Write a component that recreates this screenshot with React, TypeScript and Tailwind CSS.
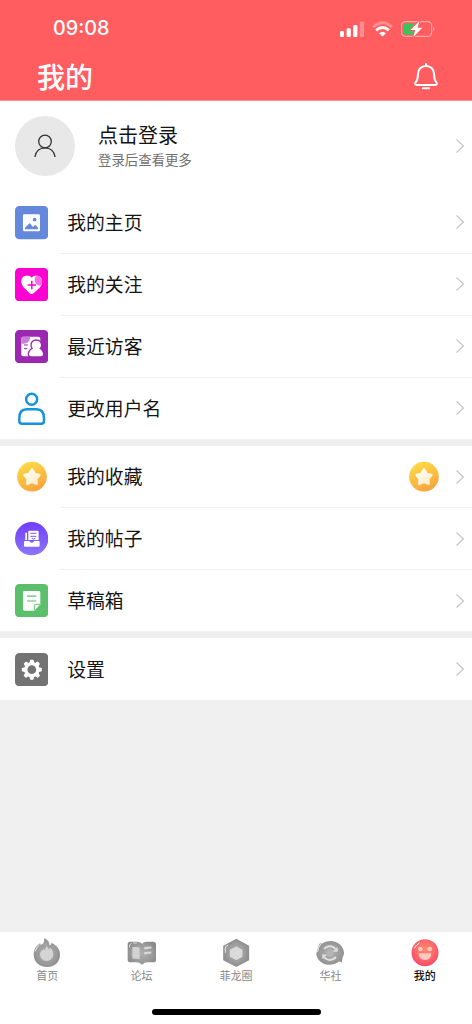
import type { ReactNode } from "react";

interface MenuItem {
    label: string;
    icon: ReactNode;
    extra?: ReactNode;
}

interface TabItem {
    label: string;
    icon: ReactNode;
    active?: boolean;
}

const Tile = ({ color, children }: { color: string; children: ReactNode }) => (
    <svg viewBox="0 0 100 100" className="w-[33.3px] h-[33.3px]">
        <rect width="100" height="100" rx="13" fill={color} />
        {children}
    </svg>
);

const PhotoIcon = () => (
    <Tile color="#6489dc">
        <rect x="24" y="25" width="51" height="51" rx="4" fill="#fff" />
        <circle cx="59" cy="41" r="5.5" fill="#6489dc" />
        <path d="M30 70V65L42 53Q44 51 46 53L54 63L59 58Q61 57 63 58L69 65V70Z" fill="#6489dc" />
    </Tile>
);

const HeartIcon = () => (
    <Tile color="#ff00d2">
        <clipPath id="heart">
            <path d="M50 29C43 20 29 20 22 29C16 38 19 50 27 59L44 76Q50 81 56 76L74 59C82 50 85 38 78 29C71 20 57 20 50 29Z" />
        </clipPath>
        <g clipPath="url(#heart)">
            <rect width="100" height="100" fill="#fff" />
            <circle cx="76" cy="36" r="17" fill="#ff6be6" />
        </g>
        <path d="M38 51H63M50.500 38V64" stroke="#ff00d2" strokeWidth="4.500" />
    </Tile>
);

const VisitorIcon = () => (
    <Tile color="#9c27b0">
        <rect x="19" y="20" width="57" height="59" rx="6" fill="#fff" />
        <path d="M19 41V26Q19 20 25 20H46Q45 40 25 41Z" fill="#c77ed6" />
        <path d="M27 45H39M27 56H37" stroke="#9c27b0" strokeWidth="3" />
        <path
            d="M64 32C55 32 50 38 50 45C50 50 52 53 54 56C45 60 42 66 42 73Q42 79 48 79H78Q84 79 84 73C84 66 81 60 73 56C76 53 78 50 78 45C78 38 73 32 64 32Z"
            fill="#fff"
            stroke="#9c27b0"
            strokeWidth="8"
            paintOrder="stroke"
        />
    </Tile>
);

const UserIcon = () => (
    <svg viewBox="0 0 100 100" className="w-[33.3px] h-[33.3px]" fill="none" stroke="#1694db" strokeWidth="7.500">
        <circle cx="50" cy="22" r="16.500" />
        <path d="M35 52H65C80 52 87 63 87 79V87Q87 95 79 95H21Q13 95 13 87V79C13 63 20 52 35 52Z" />
    </svg>
);

const StarIcon = () => (
    <svg viewBox="0 0 100 100" className="w-[33.3px] h-[33.3px]">
        <defs>
            <linearGradient id="gold" x1="0.3" y1="0" x2="0.7" y2="1">
                <stop offset="0" stopColor="#fddb46" />
                <stop offset="1" stopColor="#f7a33e" />
            </linearGradient>
            <linearGradient id="cream" x1="0" y1="0" x2="1" y2="1">
                <stop offset="0" stopColor="#fffdf5" />
                <stop offset="1" stopColor="#fdebc9" />
            </linearGradient>
        </defs>
        <circle cx="51" cy="50" r="44.500" fill="url(#gold)" />
        <path
            d="M51 29L59 42L73 45L63.500 57L65 71L51 65.500L37 71L38.500 57L29 45L43 42Z"
            fill="url(#cream)"
            stroke="url(#cream)"
            strokeWidth="8"
            strokeLinejoin="round"
        />
    </svg>
);

const PostIcon = () => (
    <svg viewBox="0 0 100 100" className="w-[33.3px] h-[33.3px]">
        <linearGradient id="violet" x1="0" y1="0" x2="0" y2="1">
            <stop offset="0" stopColor="#703cff" />
            <stop offset="1" stopColor="#8d76fa" />
        </linearGradient>
        <circle cx="50" cy="50" r="50" fill="url(#violet)" />
        <path d="M31 32H36V54H31ZM40 29Q40 26 43 26H68Q71 26 71 29V54H40Z" fill="#fff" />
        <path d="M46 34H64M46 43H64M50 49Q55 54 61 49" stroke="#7957f6" strokeWidth="3" fill="none" />
        <path d="M27 60Q27 57 30 57H43Q45 62 50 62Q55 62 58 57H71Q74 57 74 60V71Q74 74 71 74H30Q27 74 27 71Z" fill="#fff" />
    </svg>
);

const DraftIcon = () => (
    <Tile color="#5bbf6c">
        <path d="M28 21H72Q76 21 76 25V61L58 80H28Q24 80 24 76V25Q24 21 28 21Z" fill="#fff" />
        <path d="M36 36.500H64M36 51H64" stroke="#5bbf6c" strokeWidth="3.500" />
        <path d="M58 79V64Q58 61 61 61H75" fill="#fff" stroke="#5bbf6c" strokeWidth="3" />
    </Tile>
);

const GearIcon = () => (
    <Tile color="#737373">
        <circle cx="50.500" cy="50" r="18" fill="none" stroke="#fff" strokeWidth="10" />
        {[0, 45, 90, 135, 180, 225, 270, 315].map((deg) => (
            <path
                key={deg}
                d="M45 22Q45 20 47 20H54Q56 20 56 22L58 32H43Z"
                fill="#fff"
                transform={`rotate(${deg} 50.5 50)`}
            />
        ))}
    </Tile>
);

const Chevron = () => (
    <svg viewBox="0 0 10 16" className="w-[10px] h-[16px]" fill="none" stroke="#c3c3c6" strokeWidth="1.100">
        <path d="M1.500 1.500L8.500 8L1.500 14.500" />
    </svg>
);

const FlameTab = () => (
    <svg viewBox="0 0 90 90" className="w-[30px] h-[30px]">
        <path d="M36 1C48 5 52 12 53 22C56 21 58 18 58 14C75 22 84 34 84 50C84 72 67 87 45 87C22 87 5 72 5 49C5 35 11 24 22 17Q26 15 26 21C34 19 38 13 36 1Z" fill="url(#grey)" />
        <path d="M35 34L38 37L44 24L50 34L55 30C61 35 64 41 64 49C64 61 55 69 44 69C33 69 24 61 24 49C24 42 28 37 35 34Z" fill="#d4d4d4" />
        <path d="M10 39Q13 27 21 22" stroke="#fff" strokeWidth="2.500" fill="none" strokeLinecap="round" />
    </svg>
);

const BookTab = () => (
    <svg viewBox="0 0 90 90" className="w-[30px] h-[30px]">
        <path d="M2 19Q2 11 10 11H30Q40 11 45 17Q50 11 60 11H78Q87 11 87 19V65Q87 73 79 73H61Q53 73 45 80Q37 73 29 73H11Q2 73 2 65Z" fill="url(#grey)" />
        <path d="M17 27H32Q38 27 38 33V64Q34 62 28 62H20Q16 62 16 58V31Q16 27 17 27Z" fill="#d2d2d2" />
        <path d="M52 32Q61 28 73 29M52 47Q61 43 73 44" stroke="#d8d8d8" strokeWidth="7" fill="none" />
        <path d="M7 27Q7 17 13 16M19 15H29" stroke="#fff" strokeWidth="2" fill="none" strokeLinecap="round" />
    </svg>
);

const HexTab = () => (
    <svg viewBox="0 0 90 90" className="w-[30px] h-[30px]">
        <path d="M46 5L82 25V65L46 84L9 65V25Z" fill="url(#grey)" stroke="#929292" strokeWidth="5" strokeLinejoin="round" />
        <path d="M46 28L62 37V55L46 64L29 55V37Z" fill="#dadada" stroke="#dadada" strokeWidth="5" strokeLinejoin="round" />
        <path d="M13 43V30Q13 24 20 22" stroke="#fff" strokeWidth="2.500" fill="none" strokeLinecap="round" />
    </svg>
);

const CycleTab = () => (
    <svg viewBox="0 0 90 90" className="w-[30px] h-[30px]">
        <path d="M45 9C66 9 85 22 87 44Q87 51 83 58L80 74L73 70C63 78 52 80 42 80C22 80 5 65 4 47L9 28L15 16L20 17Q31 9 45 9Z" fill="url(#grey)" />
        <circle cx="45" cy="45" r="11" fill="#b4b4b4" />
        <path d="M28 33C36 22 53 22 61 33" stroke="#e0e0e0" strokeWidth="6" fill="none" />
        <path d="M68 26V41H54Z" fill="#e0e0e0" />
        <path d="M63 57C54 68 37 69 28 58" stroke="#e0e0e0" strokeWidth="6" fill="none" />
        <path d="M22 64V49L36 50Z" fill="#e0e0e0" />
        <path d="M8 41Q8 29 17 19" stroke="#fff" strokeWidth="2.500" fill="none" strokeLinecap="round" />
    </svg>
);

const SmileTab = () => (
    <svg viewBox="0 0 90 90" className="w-[30px] h-[30px]">
        <radialGradient id="coral" cx="0.5" cy="0.4" r="0.55">
            <stop offset="0" stopColor="#ff8a70" />
            <stop offset="0.6" stopColor="#fb6c6c" />
            <stop offset="1" stopColor="#f94e68" />
        </radialGradient>
        <circle cx="45" cy="44" r="40.500" fill="url(#coral)" />
        <circle cx="31" cy="33" r="7" fill="#ffc9c0" />
        <circle cx="59" cy="33" r="7" fill="#ffc9c0" />
        <path d="M26 46H64Q64 66 45 66Q26 66 26 46Z" fill="#ffc9c0" />
        <path d="M14 30L19 22M21 21L27 16" stroke="#fff" strokeWidth="3" strokeLinecap="round" />
    </svg>
);

const groups: MenuItem[][] = [
    [
        { label: "我的主页", icon: <PhotoIcon /> },
        { label: "我的关注", icon: <HeartIcon /> },
        { label: "最近访客", icon: <VisitorIcon /> },
        { label: "更改用户名", icon: <UserIcon /> },
    ],
    [
        { label: "我的收藏", icon: <StarIcon />, extra: <StarIcon /> },
        { label: "我的帖子", icon: <PostIcon /> },
        { label: "草稿箱", icon: <DraftIcon /> },
    ],
    [{ label: "设置", icon: <GearIcon /> }],
];

const tabs: TabItem[] = [
    { label: "首页", icon: <FlameTab /> },
    { label: "论坛", icon: <BookTab /> },
    { label: "菲龙圈", icon: <HexTab /> },
    { label: "华社", icon: <CycleTab /> },
    { label: "我的", icon: <SmileTab />, active: true },
];

const Header = () => (
    <header className="h-[101px] bg-[#ff5d60] border-b border-[#ff9495] text-white">
        <div className="h-[56px] pl-[53px] pr-[36px] pt-px flex items-center justify-between">
            <span className="font-['Inter',sans-serif] text-[19.8px] font-medium leading-none">09:08</span>
            <div className="flex items-center gap-[8px]">
                <svg viewBox="0 0 24 16" className="w-[24px] h-[16px]" fill="#fff">
                    <rect x="0" y="10" width="4" height="6" rx="1.200" />
                    <rect x="6.600" y="7.200" width="4.200" height="8.800" rx="1.200" />
                    <rect x="13.200" y="4" width="4.200" height="12" rx="1.200" />
                    <rect x="19.800" y="0.500" width="4.200" height="15.500" rx="1.200" opacity="0.3" />
                </svg>
                <svg viewBox="0 0 21 16" className="w-[21px] h-[16px]" fill="none" stroke="#fff" strokeWidth="2.800">
                    <path d="M1 6.200Q10.500 -2.600 20 6.200" opacity="0.3" />
                    <path d="M4.200 9.400Q10.500 3.700 16.800 9.400" />
                    <path d="M7 12.200Q10.500 9.200 14 12.200L10.500 15.600Z" fill="#fff" stroke="none" />
                </svg>
                <svg viewBox="0 0 35 18" className="w-[35px] h-[18px]">
                    <rect x="0.600" y="1.600" width="30" height="14.800" rx="4" fill="none" stroke="#fff" strokeOpacity="0.45" strokeWidth="1.200" />
                    <path d="M32.200 6.500Q34.400 9 32.200 11.500Z" fill="#fff" opacity="0.5" />
                    <path d="M4.500 3.400H13V14.600H4.500Q2.400 14.600 2.400 12.500V5.500Q2.400 3.400 4.500 3.400Z" fill="#34c759" />
                    <path d="M18.500 1L9.500 10H14.200L12.300 17L21.300 7.800H16.600Z" fill="#fff" stroke="#ff5d60" strokeWidth="2" paintOrder="stroke" />
                </svg>
            </div>
        </div>
        <div className="h-[41px] pl-[37px] pr-[33px] flex items-center justify-between">
            <h1 className="-mt-px text-[28px] font-medium leading-none">我的</h1>
            <svg viewBox="0 0 26 27" className="w-[26px] h-[27px]" fill="none" stroke="#fff" strokeWidth="2" strokeLinecap="round">
                <path d="M13 1V3M13 3C8 3 5 6.500 5 11C5 16 4.200 17.500 2.600 19.400C1.700 20.600 2.200 22 3.800 22H22.200C23.800 22 24.300 20.600 23.400 19.400C21.800 17.500 21 16 21 11C21 6.500 18 3 13 3ZM9.800 25.200H16.200" />
            </svg>
        </div>
    </header>
);

const MenuRow = ({ item, last }: { item: MenuItem; last: boolean }) => (
    <div className={last ? "h-[61.5px] flex items-center pl-[15px]" : "h-[61.9px] flex items-center pl-[15px]"}>
        {item.icon}
        <div
            className={
                last
                    ? "ml-[12px] pl-[7px] pr-[7px] h-full flex-1 flex items-center"
                    : "ml-[12px] pl-[7px] pr-[7px] h-full flex-1 flex items-center border-b border-[#f0f0f0]"
            }
        >
            <span className="flex-1 text-[18.8px] leading-none">{item.label}</span>
            {item.extra && <span className="mr-[15px]">{item.extra}</span>}
            <Chevron />
        </div>
    </div>
);

const App = () => {
    return (
        <div className="w-[472px] h-[1024px] flex flex-col bg-[#f0f0f0] text-[#151515] overflow-hidden font-['Noto_Sans_CJK_SC',sans-serif]">
            <Header />

            <main className="flex-1 flex flex-col gap-[7px]">
                {groups.map((group, index) => (
                    <section key={index} className="bg-white">
                        {index === 0 && (
                            <div className="h-[91px] flex items-center pl-[15px] pr-[7px] pb-[2px]">
                                <div className="w-[60px] h-[60px] rounded-full bg-[#e8e8e8] flex items-center justify-center">
                                    <svg viewBox="0 0 22 24" className="w-[22px] h-[24px]" fill="none" stroke="#333" strokeWidth="1.300">
                                        <circle cx="11" cy="7.500" r="6.300" />
                                        <path d="M0.900 23C1.700 17.500 5.500 13.800 11 13.800S20.300 17.500 21.100 23" />
                                    </svg>
                                </div>
                                <div className="ml-[23px] flex-1">
                                    <p className="text-[20px] leading-[27px]">点击登录</p>
                                    <p className="text-[13.4px] leading-[22px] text-[#707070]">登录后查看更多</p>
                                </div>
                                <Chevron />
                            </div>
                        )}
                        {group.map((item, i) => (
                            <MenuRow key={item.label} item={item} last={i === group.length - 1} />
                        ))}
                    </section>
                ))}
            </main>

            <nav className="h-[92px] bg-white pt-[6px] flex flex-col">
                <svg className="w-0 h-0 absolute">
                    <radialGradient id="grey" cx="0.5" cy="0.5" r="0.6">
                        <stop offset="0" stopColor="#b0b0b0" />
                        <stop offset="0.6" stopColor="#9c9c9c" />
                        <stop offset="1" stopColor="#888" />
                    </radialGradient>
                </svg>
                <div className="grid grid-cols-5">
                    {tabs.map((tab) => (
                        <div key={tab.label} className="flex flex-col items-center">
                            {tab.icon}
                            <span
                                className={
                                    tab.active
                                        ? "text-[11px] leading-[14px] font-medium text-[#111]"
                                        : "text-[11px] leading-[14px] text-[#888]"
                                }
                            >
                                {tab.label}
                            </span>
                        </div>
                    ))}
                </div>
                <div className="mt-auto mb-[9px] mx-auto w-[169px] h-[6px] rounded-full bg-black" />
            </nav>
        </div>
    );
};

export default App;
